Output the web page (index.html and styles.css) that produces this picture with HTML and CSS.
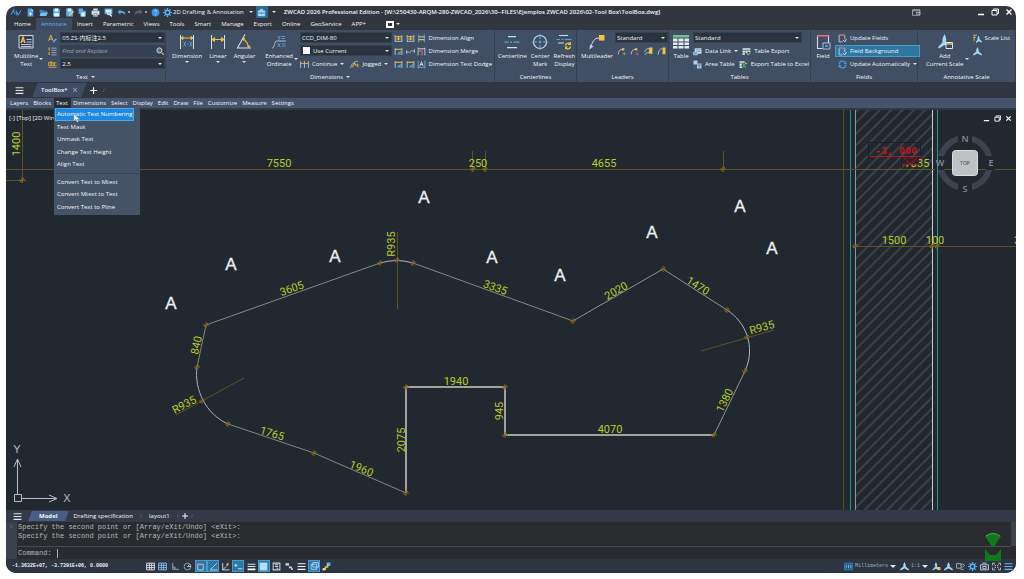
FILE: index.html
```
<!DOCTYPE html>
<html lang="en">

<head>
    <meta charset="UTF-8">
    <meta name="viewport" content="width=device-width, initial-scale=1.0">
    <title>ZWCAD 2026 Professional Edition</title>
    <link rel="stylesheet" href="styles.css">
</head>

<body>
    <!-- icon sprite -->
    <svg class="sprite" aria-hidden="true">
        <symbol id="i-logo" viewBox="0 0 20 16"><path d="M1 12 6 3v5M8 12V6M11 13V7l3 5 5-8" fill="none" stroke="#3f9be8" stroke-width="1.8"/></symbol>
        <symbol id="i-new" viewBox="0 0 16 16"><path d="M3 1h7l3 4v10H3z" fill="#4ea6ea"/><path d="M10 1v4h3" fill="#d5ecff"/><path d="M8 8v5M5.500 10.500h5" stroke="#fff" stroke-width="1.500"/></symbol>
        <symbol id="i-open" viewBox="0 0 16 16"><path d="M1 3h5l2 2h6v3H1z" fill="#2f86cf"/><path d="M3 8h13l-3 6H1z" fill="#7cc0f2"/></symbol>
        <symbol id="i-save" viewBox="0 0 16 16"><path d="M2 1h10l2 2v12H2z" fill="#58adf0"/><path d="M5 1h6v5H5zM4 9h8v6H4z" fill="#e6f3ff"/></symbol>
        <symbol id="i-saveas" viewBox="0 0 16 16"><path d="M2 1h10l2 2v12H2z" fill="#58adf0"/><path d="M5 1h6v5H5z" fill="#e6f3ff"/><path d="M7 14l1-4 6-5 2 2-6 6z" fill="#f0c58a"/></symbol>
        <symbol id="i-multi" viewBox="0 0 16 16"><path d="M1 1h8v4h5v10H4V10H1z" fill="#58adf0"/><path d="M6 8h6v7H6z" fill="#e6f3ff"/></symbol>
        <symbol id="i-print" viewBox="0 0 16 16"><path d="M4 1h8v4h3v7h-3v3H4v-3H1V5h3z" fill="#d9e2ec"/><path d="M4 5h8M5 10h6v3H5z" stroke="#44536a" fill="#fff"/></symbol>
        <symbol id="i-preview" viewBox="0 0 16 16"><path d="M1 1h14v10H1z" fill="#4ea6ea"/><path d="M3 3h10v5H3z" fill="#dceeff"/><circle cx="9" cy="9" r="3.500" fill="#9fd0f7" stroke="#fff"/><path d="m11 12 3 3" stroke="#fff" stroke-width="2"/></symbol>
        <symbol id="i-undo" viewBox="0 0 16 16"><path d="M1 7l5-5v3c5 0 9 2 9 8-2-3-4-4-9-4v3z" fill="#4ea6ea"/></symbol>
        <symbol id="i-redo" viewBox="0 0 16 16"><path d="M15 7l-5-5v3c-5 0-9 2-9 8 2-3 4-4 9-4v3z" fill="#596474"/></symbol>
        <symbol id="i-help" viewBox="0 0 16 16"><circle cx="8" cy="8" r="7" fill="#3a94e0"/><path d="M6 6c0-3 4-3 4 0 0 1.500-2 1.500-2 3.500M8 11v2" stroke="#9fd4ff" fill="none" stroke-width="1.500"/></symbol>
        <symbol id="i-gear" viewBox="0 0 16 16"><circle cx="8" cy="8" r="4" fill="none" stroke="#5cb8f5" stroke-width="2.500"/><path d="M8 0v3M8 13v3M0 8h3M13 8h3M2.500 2.500l2 2M11.500 11.500l2 2M13.500 2.500l-2 2M4.500 11.500l-2 2" stroke="#5cb8f5" stroke-width="2.200"/></symbol>
        <symbol id="i-bag" viewBox="0 0 16 16"><path d="M2 5h12v9H2zM6 5V2h4v3" fill="#a8dbfa" stroke="#a8dbfa"/><path d="M2 9h12M8 8v3" stroke="#2a6e9f" stroke-width="1.300"/></symbol>
        <symbol id="i-screen" viewBox="0 0 16 16"><path d="M1 3h13v10H1zM1 5h13M8 8h6v3H8z" fill="none" stroke="#b6bec9" stroke-width="1.400"/></symbol>
        <symbol id="i-min" viewBox="0 0 16 16"><path d="M2 13h12" stroke="currentColor" stroke-width="3"/></symbol>
        <symbol id="i-restore" viewBox="0 0 16 16"><path d="M2 5h10v9H2zM5 5V2h10v9h-3" fill="none" stroke="currentColor" stroke-width="2"/></symbol>
        <symbol id="i-close" viewBox="0 0 16 16"><path d="m3 3 10 10M13 3 3 13" stroke="currentColor" stroke-width="2.800"/></symbol>
        <symbol id="i-burger" viewBox="0 0 16 16"><path d="M1 3h14M1 8h14M1 13h14" stroke="currentColor" stroke-width="2"/></symbol>
        <symbol id="i-plus" viewBox="0 0 16 16"><path d="M8 2v12M2 8h12" stroke="currentColor" stroke-width="2"/></symbol>

        <symbol id="i-mtext" viewBox="0 0 32 32"><path d="M2 3h28v25H2z" fill="#334052" stroke="#cdd8e4" stroke-width="2"/><path d="m6 18 4-12 4 12M7 14h6" fill="none" stroke="#f3c545" stroke-width="2.500"/><path d="M17 11h10M17 16h10M6 21h21M6 25h21" stroke="#cdd8e4" stroke-width="1.800"/></symbol>
        <symbol id="i-tstyle" viewBox="0 0 16 16"><path d="M1 12 5 2l4 10M2 9h6" fill="none" stroke="#f0c040" stroke-width="1.600"/><path d="M10 15c0-4 3-4 5-6" stroke="#5eb4ee" stroke-width="2.500" fill="none"/></symbol>
        <symbol id="i-list" viewBox="0 0 16 16"><path d="M2 1v5M2 9v5" stroke="#f0c040" stroke-width="1.800"/><path d="M6 2h9M6 6h9M6 10h9M6 14h9" stroke="#b8c5d4" stroke-width="1.300"/></symbol>
        <symbol id="i-abc" viewBox="0 0 16 16"><path d="M1 4h4v6H1zM6 2v8h4V5H6M15 5h-4v5h4" fill="none" stroke="#e3a93c" stroke-width="1.600"/><path d="M1 13h14" stroke="#d8a94a" stroke-width="1.500"/></symbol>
        <symbol id="i-find" viewBox="0 0 16 16"><circle cx="6" cy="6" r="4.500" fill="#54708c" stroke="#cfd9e3" stroke-width="1.600"/><path d="m10 10 4 4" stroke="#e8b63b" stroke-width="2.500"/></symbol>
        <symbol id="i-dim" viewBox="0 0 32 32"><path d="M3 2v28M29 2v28" stroke="#d5dde6" stroke-width="2"/><path d="M4 8h24M4 8l4-3v6zM28 8l-4-3v6z" stroke="#f3bf3b" fill="#f3bf3b" stroke-width="2"/><path d="m9 15 5 10M14 15 9 25M16 20h4M21 15l5 10M26 15l-5 10" stroke="#56acdf" stroke-width="1.500"/></symbol>
        <symbol id="i-linear" viewBox="0 0 32 32"><path d="M3 2v28M29 2v28" stroke="#d5dde6" stroke-width="2"/><path d="M4 11h24M4 11l5-4v8zM28 11l-5-4v8z" stroke="#f3bf3b" fill="#f3bf3b" stroke-width="2"/></symbol>
        <symbol id="i-angular" viewBox="0 0 32 32"><path d="M18 1 3 28h27" fill="none" stroke="#d5dde6" stroke-width="2.200"/><path d="M13 10c7 3 11 8 12 17" fill="none" stroke="#f3bf3b" stroke-width="2.500"/><path d="m13 7 6 2-4 5zM22 24l7-1-3 6z" fill="#f3bf3b"/></symbol>
        <symbol id="i-ordinate" viewBox="0 0 32 32"><path d="M2 28c6 0 4-14 9-14h19" fill="none" stroke="#bccbd9" stroke-width="1.800"/><path d="m13 4 3 4 3-4M16 8v4M21 5h7M21 9h7M13 18l6 8M19 18l-6 8M22 20h7M22 24h7" stroke="#4fa6d8" stroke-width="1.800" fill="none"/></symbol>
        <symbol id="i-d1" viewBox="0 0 16 16"><path d="M2 2v12M14 2v12M2 13h12" stroke="#d5dde6" stroke-width="1.400"/><path d="M2 5h12M8 3v8M4 9h8" stroke="#f3bf3b" stroke-width="1.800"/></symbol>
        <symbol id="i-d2" viewBox="0 0 16 16"><path d="M2 2v12M14 2v12" stroke="#d5dde6" stroke-width="1.400"/><path d="M2 4h12" stroke="#f3bf3b" stroke-width="2"/><path d="m6 13 6-5M9 13l4-1" stroke="#54aee6" stroke-width="2"/></symbol>
        <symbol id="i-d3" viewBox="0 0 16 16"><path d="M3 1v14M13 1v14" stroke="#72b9ea" stroke-width="1.400"/><path d="M3 5h10" stroke="#e5edf5" stroke-width="1.400"/><path d="M3 10h10" stroke="#f3bf3b" stroke-width="2"/></symbol>
        <symbol id="i-d4" viewBox="0 0 16 16"><path d="M1 6v6M15 4v6M1 9h4M11 7h4M6 11l4-5" stroke="#d5dde6" stroke-width="1.400"/></symbol>
        <symbol id="i-d5" viewBox="0 0 16 16"><path d="M2 1v14M14 1v14M2 3h12" stroke="#d5dde6" stroke-width="1.400"/><path d="M9 3v12" stroke="#df6f79" stroke-width="1.800"/><path d="M4 7h3" stroke="#f3bf3b" stroke-width="2"/></symbol>
        <symbol id="i-d6" viewBox="0 0 16 16"><path d="M2 1v14M14 1v14M2 13h12" stroke="#72b9ea" stroke-width="1.400"/><path d="m5 11 3-8 3 8M6 8h4" stroke="#e5edf5" fill="none" stroke-width="1.400"/></symbol>
        <symbol id="i-cont" viewBox="0 0 16 16"><path d="M1 2v12M8 2v12M15 2v12" stroke="#d5dde6" stroke-width="1.300"/><path d="M1 6h14" stroke="#f3bf3b" stroke-width="1.600"/></symbol>
        <symbol id="i-jog" viewBox="0 0 16 16"><path d="M1 14c2-7 5-11 13-12" fill="none" stroke="#d5dde6" stroke-width="1.300"/><path d="m4 13 4-8 2 5 4-3v6" fill="none" stroke="#f3bf3b" stroke-width="1.700"/></symbol>
        <symbol id="i-cline" viewBox="0 0 32 32"><path d="M8 5h16M6 27h20" stroke="#d5dde6" stroke-width="2.500"/><path d="M1 16h8M12 16h4M19 16h12" stroke="#45a9de" stroke-width="2.500"/></symbol>
        <symbol id="i-cmark" viewBox="0 0 32 32"><circle cx="16" cy="16" r="13" fill="none" stroke="#d5dde6" stroke-width="2.200"/><path d="M16 0v10M16 13v6M16 22v10M0 16h10M13 16h6M22 16h10" stroke="#5bb5e8" stroke-width="2"/></symbol>
        <symbol id="i-refresh" viewBox="0 0 32 32"><path d="M6 3h18M4 18h12" stroke="#d5dde6" stroke-width="2"/><path d="M1 11h7M11 11h4M18 11h13" stroke="#45a9de" stroke-width="2"/><path d="M19 23c1-6 8-6 10-2M29 25c-1 6-8 6-10 2" fill="none" stroke="#f3bf3b" stroke-width="3"/><path d="M30 15v7h-7zM18 31v-6h6z" fill="#f3bf3b"/></symbol>
        <symbol id="i-mleader" viewBox="0 0 32 32"><path d="M4 27C6 16 10 8 20 8" fill="none" stroke="#d5dde6" stroke-width="2"/><path d="M1 31l1-10 7 4z" fill="#a9d6f4"/><path d="M20 2h11v11H20z" fill="#f7c344"/></symbol>
        <symbol id="i-ml1" viewBox="0 0 16 16"><path d="M2 13c1-6 3-9 8-9" fill="none" stroke="#d5dde6" stroke-width="1.400"/><path d="M9 2h4v4H9z" fill="#f7c344"/><path d="M13 9v6M10 12h6" stroke="#55b864" stroke-width="1.600"/></symbol>
        <symbol id="i-ml2" viewBox="0 0 16 16"><path d="M2 13c1-6 3-9 8-9" fill="none" stroke="#d5dde6" stroke-width="1.400"/><path d="M9 2h4v4H9z" fill="#f7c344"/><path d="m11 10 4 4M15 10l-4 4" stroke="#dd6571" stroke-width="1.600"/></symbol>
        <symbol id="i-ml3" viewBox="0 0 16 16"><path d="M1 9c1-4 3-6 8-6M2 14c1-4 3-4 8-4" fill="none" stroke="#d5dde6" stroke-width="1.400"/><path d="M9 1h6v11H9z" fill="#f7c344"/></symbol>
        <symbol id="i-ml4" viewBox="0 0 16 16"><path d="M2 14c1-8 3-11 8-11" fill="none" stroke="#d5dde6" stroke-width="1.400"/><path d="M10 1h5v12h-5z" fill="#f7c344"/></symbol>
        <symbol id="i-table" viewBox="0 0 32 32"><path d="M0 2h32v5H0z" fill="#78bf85"/><path d="M0 9h9v6H0zM11 9h10v6H11zM23 9h9v6h-9zM0 17h9v5H0zM11 17h10v5H11zM23 17h9v5h-9zM0 24h9v5H0zM11 24h10v5H11zM23 24h9v5h-9z" fill="#e5ebf1"/></symbol>
        <symbol id="i-dlink" viewBox="0 0 16 16"><path d="M3 2h12v10H3z" fill="#c8d5e2"/><path d="M5 5h8M5 8h8" stroke="#4a7fae"/><path d="M1 9h7v5H1z" fill="#4ea0dc" stroke="#dce9f5"/></symbol>
        <symbol id="i-area" viewBox="0 0 16 16"><path d="M1 1h7v7H1zM7 6h8v9H7z" fill="#b7cbdd"/><path d="M3 10v5M7 9h8M11 6v9" stroke="#3f7fb3" stroke-width="1.300"/></symbol>
        <symbol id="i-texp" viewBox="0 0 16 16"><path d="M1 2h14v3H1zM1 6h4v4H1zM6 6h4v4H6zM11 6h4v3h-4zM1 11h4v3H1z" fill="#dfe6ed"/><path d="m8 11 3 3 4-4" stroke="#69c075" fill="none" stroke-width="2"/></symbol>
        <symbol id="i-xls" viewBox="0 0 16 16"><path d="M1 2h9v3H1zM1 6h4v4H1zM1 11h4v3H1z" fill="#dfe6ed"/><path d="m6 5 6 9M12 5l-6 9" stroke="#48b06a" stroke-width="2"/><path d="m11 4 4 2-3 2z" fill="#f3bf3b"/></symbol>
        <symbol id="i-field" viewBox="0 0 32 32"><path d="M5 3h22v16M5 3v26h10" fill="none" stroke="#d5dde6" stroke-width="2.200"/><path d="M5 4h22" stroke="#d94e66" stroke-width="3"/><path d="M16 18h14v12H16z" fill="#334b67" stroke="#a9c2da" stroke-width="2"/><path d="M20 24h6" stroke="#66b7ea" stroke-width="3"/></symbol>
        <symbol id="i-fsm" viewBox="0 0 16 16"><path d="M2 2h10v7M2 2v12h6" fill="none" stroke="#d5dde6" stroke-width="1.400"/><path d="M2 2h10" stroke="#d94e66" stroke-width="2"/><path d="m9 11 3 3 3-5" fill="none" stroke="#eaf2f9" stroke-width="1.600"/></symbol>
        <symbol id="i-sync" viewBox="0 0 16 16"><path d="M2 8c0-7 9-8 11-3M14 8c0 7-9 8-11 3" fill="none" stroke="#3fa0df" stroke-width="2"/><path d="M15 2v5h-5zM1 14V9h5z" fill="#3fa0df"/></symbol>
        <symbol id="i-scale" viewBox="0 0 32 32"><path d="M15 0c4 8 4 12 3 16l9 9-1 3-11-6-11 7-2-3 9-9C10 12 11 8 15 0z" fill="#a5d9f3"/><path d="M18 17h13v12H18z" fill="#324860" stroke="#e0ebf4" stroke-width="2"/><path d="M18 20h13" stroke="#e6bb4a" stroke-width="3"/></symbol>
        <symbol id="i-ssm" viewBox="0 0 16 16"><path d="M8 0c2 4 3 6 2 8l6 5-1 2-6-3-1-1-1 1-6 3-1-2 6-5C5 6 6 4 8 0z" fill="#a5d9f3"/></symbol>
        <symbol id="i-slist" viewBox="0 0 16 16"><path d="M10 3c2 3 2 5 1 6l5 4-1 2-5-2-4 3-1-2 3-4c0-2 0-4 2-7z" fill="#a5d9f3"/><path d="M1 2h6M1 6h4M2 2v10" stroke="#f3bf3b" stroke-width="1.500"/></symbol>

        <symbol id="s-grid" viewBox="0 0 16 16"><path d="M1 2h14v12H1zM6 2v12M10 2v12M1 6h14M1 10h14" fill="none" stroke="#dbe4ee" stroke-width="1.600"/></symbol>
        <symbol id="s-snap" viewBox="0 0 16 16"><path d="M1 2h14v12H1zM6 2v12M10 2v12M1 6h14M1 10h14" fill="none" stroke="#86bdea" stroke-width="1.600"/></symbol>
        <symbol id="s-ortho" viewBox="0 0 16 16"><path d="M3 2v11h11M3 9h4v4" fill="none" stroke="#a3adba" stroke-width="1.600"/></symbol>
        <symbol id="s-polar" viewBox="0 0 16 16"><circle cx="8" cy="8" r="6" fill="none" stroke="#9fb0c0" stroke-width="1.500"/><path d="M8 8h6M8 8l4-4" stroke="#cfdae5" stroke-width="1.500"/></symbol>
        <symbol id="s-osnap" viewBox="0 0 16 16"><path d="M3 4h10v10H3z" fill="none" stroke="#c3d6e8" stroke-width="1.500"/><path d="M1 2h4v4H1z" fill="#df7280"/></symbol>
        <symbol id="s-track" viewBox="0 0 16 16"><path d="M14 2 2 14h13" fill="none" stroke="#b9ddf7" stroke-width="1.500"/></symbol>
        <symbol id="s-ucs" viewBox="0 0 16 16"><path d="M3 2v12h12M3 14 9 8" fill="none" stroke="#dbe4ee" stroke-width="1.600"/><path d="m10 3 3 3M13 2l-3 5" stroke="#f0c040" stroke-width="2"/></symbol>
        <symbol id="s-dyn" viewBox="0 0 16 16"><path d="M3 3v6M1 6h5M7 12h8" stroke="#b9ddf7" stroke-width="1.800"/></symbol>
        <symbol id="s-lwt" viewBox="0 0 16 16"><path d="M1 4h14M1 8h14" stroke="#dbe4ee" stroke-width="2"/><path d="M1 13h14" stroke="#fff" stroke-width="3"/></symbol>
        <symbol id="s-fill" viewBox="0 0 16 16"><path d="M1 1h14v14H1z" fill="#b2ddfa"/></symbol>
        <symbol id="s-cyc" viewBox="0 0 16 16"><path d="M2 2h12v12H2zM5 5h6M5 8h6M8 11h3" fill="none" stroke="#cdd6e0" stroke-width="1.800"/></symbol>
        <symbol id="s-sel" viewBox="0 0 16 16"><path d="M1 2h6v4H1zM7 8h5v3H7zM11 11h3v3h-3z" fill="#d7e1ec"/><path d="m3 3 9 9" stroke="#8fb8da"/></symbol>
        <symbol id="s-model" viewBox="0 0 16 16"><path d="M5 1h10v8H5zM2 4h10v9H2z" fill="#2d77b3" stroke="#b7dcf7" stroke-width="1.500"/></symbol>
        <symbol id="s-paint" viewBox="0 0 16 16"><path d="M8 1h7v6H8z" fill="#62b2ef"/><path d="M2 13h4V9h4V5" fill="none" stroke="#f0c040" stroke-width="2.500"/><path d="M1 11h4v4H1z" fill="#dbe4ee"/></symbol>
        <symbol id="s-units" viewBox="0 0 16 16"><path d="M1 2h14v12H1z" fill="#1c5a82" stroke="#4ba0d6"/><path d="M4 5v6M8 5v6M12 5v6" stroke="#7fc3ef" stroke-width="1.500"/></symbol>
        <symbol id="s-anno" viewBox="0 0 16 16"><path d="M7 0c2 4 3 6 2 8l5 5-1 2-6-3-6 3v-2l5-5C4 6 5 4 7 0z" fill="#9dd0ef"/><path d="M10 9h5v5h-5z" fill="#f0c040"/></symbol>
        <symbol id="s-link" viewBox="0 0 16 16"><path d="M1 3h8v8H1zM9 6l3-3 3 3-4 4M8 13h6" fill="none" stroke="#b6c0cc" stroke-width="1.500"/></symbol>
        <symbol id="s-iso" viewBox="0 0 16 16"><path d="M1 5h14v9H1zM4 2h8M5 8h6v4H5z" fill="none" stroke="#c6d0db" stroke-width="1.600"/></symbol>
        <symbol id="s-full" viewBox="0 0 16 16"><path d="M1 6V2h4M11 2h4v4M15 10v4h-4M5 14H1v-4M4 5l3 2M12 5 9 7M4 11l3-2M12 11 9 9" fill="none" stroke="#c6d0db" stroke-width="1.600"/></symbol>
    </svg>

    <main class="window">
        <!-- title bar -->
        <header class="titlebar">
            <div class="quick">
                <button aria-label="Application menu"><svg><use href="#i-logo"/></svg></button>
                <button aria-label="New"><svg><use href="#i-new"/></svg></button>
                <button aria-label="Open"><svg><use href="#i-open"/></svg></button>
                <button aria-label="Save"><svg><use href="#i-save"/></svg></button>
                <button aria-label="Save as"><svg><use href="#i-saveas"/></svg></button>
                <button aria-label="Save all"><svg><use href="#i-multi"/></svg></button>
                <button aria-label="Print"><svg><use href="#i-print"/></svg></button>
                <button aria-label="Preview"><svg><use href="#i-preview"/></svg></button>
                <button class="drop" aria-label="Undo"><svg><use href="#i-undo"/></svg><i class="dot"></i></button>
                <button class="drop" aria-label="Redo"><svg><use href="#i-redo"/></svg><i class="dot"></i></button>
                <button aria-label="Help"><svg><use href="#i-help"/></svg></button>
            </div>
            <button class="workspace"><svg><use href="#i-gear"/></svg>2D Drafting &amp; Annotation <i class="caret"></i></button>
            <button class="toolbox" aria-label="Toolbox"><svg><use href="#i-bag"/></svg></button>
            <i class="caret"></i>
            <h1>ZWCAD 2026 Professional Edition - [W:\250430-ARQM-280-ZWCAD_2026\30--FILES\Ejemplos ZWCAD 2026\02-Tool Box\ToolBox.dwg]</h1>
            <button class="share" aria-label="Share"><svg><use href="#i-screen"/></svg></button>
            <div class="win-btns">
                <button aria-label="Minimize"><svg><use href="#i-min"/></svg></button>
                <button aria-label="Restore"><svg><use href="#i-restore"/></svg></button>
                <button aria-label="Close"><svg><use href="#i-close"/></svg></button>
            </div>
        </header>

        <nav class="ribbon-tabs">
            <a href="#">Home</a>
            <a href="#" class="active">Annotate</a>
            <a href="#">Insert</a>
            <a href="#">Parametric</a>
            <a href="#">Views</a>
            <a href="#">Tools</a>
            <a href="#">Smart</a>
            <a href="#">Manage</a>
            <a href="#">Export</a>
            <a href="#">Online</a>
            <a href="#">GeoService</a>
            <a href="#">APP+</a>
            <button class="collapse" aria-label="Collapse ribbon"><b></b><i class="caret"></i></button>
        </nav>

        <!-- ribbon -->
        <div class="ribbon">
            <section class="panel p-text">
                <div class="panel-body">
                    <button class="big side"><svg><use href="#i-mtext"/></svg><span>Multiline<br>Text</span><i class="caret"></i></button>
                    <div class="col icons">
                        <button aria-label="Text style"><svg><use href="#i-tstyle"/></svg></button>
                        <button aria-label="Justify"><svg><use href="#i-list"/></svg></button>
                        <button aria-label="Spell check"><svg><use href="#i-abc"/></svg></button>
                    </div>
                    <div class="col grow">
                        <label class="select"><select aria-label="Text style name"><option>05.ZS-内标注2.5</option></select></label>
                        <div class="search"><input type="text" placeholder="Find and Replace" aria-label="Find and Replace"><button aria-label="Find"><svg><use href="#i-find"/></svg></button></div>
                        <label class="select"><select aria-label="Text height"><option>2.5</option></select></label>
                    </div>
                </div>
                <footer>Text <i class="caret"></i></footer>
            </section>

            <section class="panel p-dims">
                <div class="panel-body">
                    <button class="big"><svg><use href="#i-dim"/></svg><span>Dimension</span><i class="caret"></i></button>
                    <button class="big"><svg><use href="#i-linear"/></svg><span>Linear</span><i class="caret"></i></button>
                    <button class="big"><svg><use href="#i-angular"/></svg><span>Angular</span><i class="caret"></i></button>
                    <button class="big side"><svg><use href="#i-ordinate"/></svg><span>Enhanced<br>Ordinate</span><i class="caret"></i></button>
                    <div class="col grow">
                        <label class="select"><select aria-label="Dimension style"><option>CCD_DIM-80</option></select></label>
                        <label class="select swatch"><select aria-label="Dimension layer"><option>Use Current</option></select></label>
                        <div class="row">
                            <button class="small"><svg><use href="#i-cont"/></svg>Continue <i class="caret"></i></button>
                            <button class="small"><svg><use href="#i-jog"/></svg>Jogged <i class="caret"></i></button>
                        </div>
                    </div>
                    <div class="col icons">
                        <button aria-label="Quick dimension"><svg><use href="#i-d1"/></svg></button>
                        <button aria-label="Update"><svg><use href="#i-d2"/></svg></button>
                        <button aria-label="Break"><svg><use href="#i-d2"/></svg></button>
                    </div>
                    <div class="col icons">
                        <button aria-label="Adjust space"><svg><use href="#i-d1"/></svg></button>
                        <button aria-label="Jog line"><svg><use href="#i-d4"/></svg></button>
                        <button aria-label="Reassociate"><svg><use href="#i-d2"/></svg></button>
                    </div>
                    <div class="col">
                        <button class="small"><svg><use href="#i-d3"/></svg>Dimension Align</button>
                        <button class="small"><svg><use href="#i-d5"/></svg>Dimension Merge</button>
                        <button class="small"><svg><use href="#i-d6"/></svg>Dimension Text Dodge</button>
                    </div>
                </div>
                <footer>Dimensions <i class="caret"></i></footer>
            </section>

            <section class="panel p-center">
                <div class="panel-body">
                    <button class="big"><svg><use href="#i-cline"/></svg><span>Centerline</span></button>
                    <button class="big"><svg><use href="#i-cmark"/></svg><span>Center<br>Mark</span></button>
                    <button class="big"><svg><use href="#i-refresh"/></svg><span>Refresh<br>Display</span></button>
                </div>
                <footer>Centerlines</footer>
            </section>

            <section class="panel p-leaders">
                <div class="panel-body">
                    <button class="big"><svg><use href="#i-mleader"/></svg><span>Multileader</span></button>
                    <div class="col grow">
                        <label class="select"><select aria-label="Leader style"><option>Standard</option></select></label>
                        <div class="row">
                            <button aria-label="Add leader"><svg><use href="#i-ml1"/></svg></button>
                            <button aria-label="Remove leader"><svg><use href="#i-ml2"/></svg></button>
                            <button aria-label="Align leaders"><svg><use href="#i-ml3"/></svg></button>
                            <button aria-label="Collect leaders"><svg><use href="#i-ml4"/></svg></button>
                        </div>
                    </div>
                </div>
                <footer>Leaders</footer>
            </section>

            <section class="panel p-tables">
                <div class="panel-body">
                    <button class="big"><svg><use href="#i-table"/></svg><span>Table</span></button>
                    <div class="col">
                        <label class="select"><select aria-label="Table style"><option>Standard</option></select></label>
                        <div class="row">
                            <button class="small"><svg><use href="#i-dlink"/></svg>Data Link <i class="caret"></i></button>
                            <button class="small"><svg><use href="#i-texp"/></svg>Table Export</button>
                        </div>
                        <div class="row">
                            <button class="small"><svg><use href="#i-area"/></svg>Area Table</button>
                            <button class="small"><svg><use href="#i-xls"/></svg>Export Table to Excel</button>
                        </div>
                    </div>
                </div>
                <footer>Tables</footer>
            </section>

            <section class="panel p-fields">
                <div class="panel-body">
                    <button class="big"><svg><use href="#i-field"/></svg><span>Field</span></button>
                    <div class="col">
                        <button class="small"><svg><use href="#i-fsm"/></svg>Update Fields</button>
                        <button class="small on"><svg><use href="#i-fsm"/></svg>Field Background</button>
                        <button class="small"><svg><use href="#i-sync"/></svg>Update Automatically <i class="caret"></i></button>
                    </div>
                </div>
                <footer>Fields</footer>
            </section>

            <section class="panel p-scale">
                <div class="panel-body">
                    <button class="big side"><svg><use href="#i-scale"/></svg><span>Add<br>Current Scale</span><i class="caret"></i></button>
                    <div class="col">
                        <button class="small"><svg><use href="#i-slist"/></svg>Scale List</button>
                        <button class="small" aria-label="Object scale"><svg><use href="#i-ssm"/></svg></button>
                    </div>
                </div>
                <footer>Annotative Scale</footer>
            </section>
        </div>

        <!-- open drawings -->
        <div class="doc-tabs">
            <button class="burger" aria-label="Drawings"><svg><use href="#i-burger"/></svg></button>
            <a href="#" class="doc-tab"><span>ToolBox*</span><svg><use href="#i-close"/></svg></a>
            <button class="add" aria-label="New drawing"><svg><use href="#i-plus"/></svg></button>
            <span class="slash">/</span>
        </div>

        <nav class="menubar">
            <a href="#">Layers</a>
            <a href="#">Blocks</a>
            <div class="menu-item">
                <a href="#" class="open">Text</a>
                <div class="dropdown">
                    <a href="#" class="hover">Automatic Text Numbering</a>
                    <a href="#">Text Mask</a>
                    <a href="#">Unmask Text</a>
                    <a href="#">Change Text Height</a>
                    <a href="#">Align Text</a>
                    <hr>
                    <a href="#">Convert Text to Mtext</a>
                    <a href="#">Convert Mtext to Text</a>
                    <a href="#">Convert Text to Pline</a>
                    <svg class="cursor" viewBox="0 0 10 14"><path d="M1 0v11l3-3 2 5 2-1-2-4h4z" fill="#fff" stroke="#5a6a7a" stroke-width=".5"/></svg>
                </div>
            </div>
            <a href="#">Dimensions</a>
            <a href="#">Select</a>
            <a href="#">Display</a>
            <a href="#">Edit</a>
            <a href="#">Draw</a>
            <a href="#">File</a>
            <a href="#">Customize</a>
            <a href="#">Measure</a>
            <a href="#">Settings</a>
        </nav>

        <!-- drawing area -->
        <div class="canvas">
            <svg class="drawing" viewBox="6 110 1010 400" preserveAspectRatio="xMidYMid slice">
                <defs>
                    <pattern id="hatch" width="8" height="8" patternUnits="userSpaceOnUse" patternTransform="rotate(45)">
                        <path d="M4 0v8" stroke="#525962" stroke-width="1"/>
                    </pattern>
                    <path id="tick" d="M-3 0h6M0-3v6M-2 2l4-4" stroke="#86651c" stroke-width="1" fill="none"/>
                </defs>

                <!-- wall -->
                <rect x="856" y="110" width="76" height="400" fill="url(#hatch)"/>
                <path d="M843.500 110v400" stroke="#5d4c20"/>
                <path d="M850.500 110v400M937.500 110v400" stroke="#1f9a92"/>
                <path d="M855.500 110v400" stroke="#8f969e"/>
                <path d="M932.500 110v400" stroke="#c9cdd2"/>

                <!-- dimension lines -->
                <g stroke="#5f531e" fill="none">
                    <path d="M6 169.500h1010M855 246.500h161M22.500 110v73M6 180.500h20"/>
                    <path d="M472.500 151v21M485.500 151v21M723.500 151v21"/>
                    <path d="M397.500 232v77M176 415l68-37M701 351l73-21"/>
                </g>

                <!-- outline -->
                <g fill="none" stroke="#87887a">
                    <path d="M197 367 206 325 380 263M413 263 573 321M406 493 314 453 228 424"/>
                    <path d="M573 321 663 269 727 310M745 371 714 435" stroke="#94948c"/>
                    <path d="M380 263Q397 258 413 263M727 310C746 322 756 347 745 371M197 367C194 390 206 414 228 424" stroke="#aeb2c4"/>
                    <path d="M406 493V387H505V435H714" stroke="#a3a29a" stroke-width="2"/>
                </g>

                <g>
                    <use href="#tick" x="206" y="325"/><use href="#tick" x="197" y="367"/><use href="#tick" x="202" y="401"/>
                    <use href="#tick" x="228" y="424"/><use href="#tick" x="314" y="453"/><use href="#tick" x="406" y="493"/>
                    <use href="#tick" x="406" y="387"/><use href="#tick" x="505" y="387"/><use href="#tick" x="505" y="435"/>
                    <use href="#tick" x="714" y="435"/><use href="#tick" x="745" y="371"/><use href="#tick" x="747" y="337"/>
                    <use href="#tick" x="727" y="310"/><use href="#tick" x="663" y="269"/><use href="#tick" x="573" y="321"/>
                    <use href="#tick" x="413" y="263"/><use href="#tick" x="397" y="260"/><use href="#tick" x="380" y="263"/>
                    <use href="#tick" x="473" y="169"/><use href="#tick" x="485" y="169"/><use href="#tick" x="723" y="169"/>
                    <use href="#tick" x="22" y="180"/><use href="#tick" x="855" y="246"/><use href="#tick" x="932" y="246"/><use href="#tick" x="937" y="246"/>
                </g>

                <g class="dim">
                    <text x="279" y="167">7550</text>
                    <text x="478" y="167">250</text>
                    <text x="604" y="167">4655</text>
                    <text x="917" y="167">7335</text>
                    <text x="894" y="244">1500</text>
                    <text x="935" y="244">100</text>
                    <text x="1017" y="244">3</text>
                    <text x="456" y="385">1940</text>
                    <text x="610" y="433">4070</text>
                    <text transform="translate(20 144) rotate(-90)">1400</text>
                    <text transform="translate(395 244) rotate(-90)">R935</text>
                    <text transform="translate(293 292) rotate(-20)">3605</text>
                    <text transform="translate(200 346) rotate(-78)">840</text>
                    <text transform="translate(186 408) rotate(-28)">R935</text>
                    <text transform="translate(271 437) rotate(17)">1765</text>
                    <text transform="translate(360 472) rotate(23)">1960</text>
                    <text transform="translate(405 440) rotate(-90)">2075</text>
                    <text transform="translate(503 411) rotate(-90)">945</text>
                    <text transform="translate(728 402) rotate(-64)">1380</text>
                    <text transform="translate(763 331) rotate(-16)">R935</text>
                    <text transform="translate(696 289) rotate(32)">1470</text>
                    <text transform="translate(618 294) rotate(-30)">2020</text>
                    <text transform="translate(494 291) rotate(20)">3335</text>
                </g>

                <g class="mark">
                    <text x="171" y="309">A</text>
                    <text x="231" y="270">A</text>
                    <text x="335" y="262">A</text>
                    <text x="424" y="203">A</text>
                    <text x="492" y="263">A</text>
                    <text x="560" y="281">A</text>
                    <text x="652" y="238">A</text>
                    <text x="740" y="212">A</text>
                    <text x="772" y="254">A</text>
                </g>

                <!-- level mark -->
                <path d="M902 158h17v6h-17z" fill="#33202a"/>
                <path d="M868.500 142.500h52v14h-52zM901.500 157v11" fill="none" stroke="#1a1f25"/>
                <path d="M870 156.500h51M902 164.500h18M904 158l6 6 7-6" stroke="#b3141f" fill="none"/>
                <text class="level" x="896" y="154">-3, 000</text>

                <!-- view cube -->
                <circle cx="965" cy="163" r="25" fill="none" stroke="#3d444f" stroke-width="6"/>
                <path d="M958 134h14v8h-14zM958 184h14v9h-14zM935 156h9v14h-9zM986 156h9v14h-9z" fill="#212830"/>
                <path d="M937.500 150v26" stroke="#1f9a92"/>
                <g class="compass">
                    <text x="965" y="142">N</text>
                    <text x="965" y="192">S</text>
                    <text x="940" y="166">W</text>
                    <text x="991" y="166">E</text>
                </g>
                <rect x="952.500" y="150.500" width="25" height="25" rx="3" fill="#bfc2c4" stroke="#dcdedf"/>
                <text class="cube-top" x="965" y="165">TOP</text>

                <!-- ucs icon -->
                <g fill="none" stroke="#b9bec5">
                    <path d="M14.500 494.500h7v7h-7zM17.500 494v-35M14 467l3.500-8 3.500 8M21 498.500h36M49 495l8 3.500-8 3.500"/>
                </g>
                <g class="axis">
                    <text x="17" y="453">Y</text>
                    <text x="67" y="502">X</text>
                </g>
            </svg>
            <span class="view-label">[-] [Top] [2D Wireframe]</span>
            <div class="view-btns">
                <button aria-label="Minimize drawing"><svg><use href="#i-min"/></svg></button>
                <button aria-label="Restore drawing"><svg><use href="#i-restore"/></svg></button>
                <button aria-label="Close drawing"><svg><use href="#i-close"/></svg></button>
            </div>
        </div>

        <!-- layout tabs -->
        <nav class="layouts">
            <button class="burger" aria-label="Layouts"><svg><use href="#i-burger"/></svg></button>
            <a href="#" class="active"><span>Model</span></a>
            <a href="#">Drafting specification</a>
            <span class="slash">/</span>
            <a href="#">layout1</a>
            <div class="new-layout">
                <span class="slash">/</span>
                <button class="add" aria-label="New layout"><svg><use href="#i-plus"/></svg></button>
                <span class="slash">/</span>
            </div>
        </nav>

        <!-- command line -->
        <section class="command">
            <button class="grip" aria-label="Close command line"><svg><use href="#i-close"/></svg></button>
            <div class="cmd-main">
                <div class="history">
                    <p>Specify the second point or [Array/eXit/Undo] &lt;eXit&gt;:</p>
                    <p>Specify the second point or [Array/eXit/Undo] &lt;eXit&gt;:</p>
                </div>
                <div class="prompt"><label for="cmd">Command:</label><i class="beam"></i><input id="cmd" type="text"></div>
            </div>
            <div class="scroll"></div>
            <svg class="stamp" viewBox="0 0 16 28"><path d="M0 3Q8-3 16 3L9 14H7z" fill="#0f7a1d"/><path d="M1 3Q8-2 15 3" fill="none" stroke="#5a9a62"/><path d="M0 16l5 6h6l5-6v12H0z" fill="#0f7a1d"/></svg>
        </section>

        <!-- status bar -->
        <footer class="status">
            <span class="coords">-1.3632E+07, -3.7391E+06, 0.0000</span>
            <div class="toggles">
                <button aria-label="Grid"><svg><use href="#s-grid"/></svg></button>
                <button aria-label="Snap"><svg><use href="#s-snap"/></svg></button>
                <button aria-label="Ortho"><svg><use href="#s-ortho"/></svg></button>
                <button aria-label="Polar"><svg><use href="#s-polar"/></svg></button>
                <button class="on" aria-label="Object snap"><svg><use href="#s-osnap"/></svg></button>
                <button class="on" aria-label="Snap tracking"><svg><use href="#s-track"/></svg></button>
                <button aria-label="Dynamic UCS"><svg><use href="#s-ucs"/></svg></button>
                <button class="on" aria-label="Dynamic input"><svg><use href="#s-dyn"/></svg></button>
                <button aria-label="Lineweight"><svg><use href="#s-lwt"/></svg></button>
                <button class="on" aria-label="Transparency"><svg><use href="#s-fill"/></svg></button>
                <button aria-label="Quick properties"><svg><use href="#s-cyc"/></svg></button>
                <button aria-label="Selection cycling"><svg><use href="#s-sel"/></svg></button>
                <button aria-label="List"><svg><use href="#i-burger"/></svg></button>
                <button class="on" aria-label="Model space"><svg><use href="#s-model"/></svg></button>
                <button aria-label="Match"><svg><use href="#s-paint"/></svg></button>
            </div>
            <div class="status-right">
                <button class="unit"><svg><use href="#s-units"/></svg>Millimeters<i class="caret"></i></button>
                <button class="unit"><svg><use href="#i-ssm"/></svg>1:1<i class="caret"></i></button>
                <button aria-label="Annotation visibility"><svg><use href="#s-anno"/></svg></button>
                <button aria-label="Auto scale"><svg><use href="#i-ssm"/></svg></button>
                <button aria-label="Link"><svg><use href="#s-link"/></svg></button>
                <button aria-label="Settings"><svg><use href="#i-gear"/></svg></button>
                <button aria-label="Isolate"><svg><use href="#s-iso"/></svg></button>
                <button aria-label="Full screen"><svg><use href="#s-full"/></svg></button>
                <button class="more" aria-label="Customize"><svg><use href="#i-burger"/></svg></button>
            </div>
        </footer>
    </main>
</body>

</html>
```
FILE: styles.css
```
*,
*::before,
*::after {
    margin: 0;
    padding: 0;
    box-sizing: border-box;
}

body {
    height: 100vh;
    padding: 6px 8px 6px 6px;
    background: #fff;
    font-family: "Open Sans", "Noto Sans CJK SC", sans-serif;
    font-size: 6px;
    line-height: 8px;
    color: #f2f5f9;
}

a {
    color: inherit;
    text-decoration: none;
    white-space: nowrap;
}

button,
input,
select {
    font: inherit;
    color: inherit;
    background: none;
    border: none;
    outline: none;
}

button {
    display: flex;
    align-items: center;
    justify-content: center;
    white-space: nowrap;
}

svg {
    display: block;
    flex: none;
    width: 9px;
    height: 9px;
}

.sprite {
    position: absolute;
    width: 0;
    height: 0;
}

.window {
    height: 100%;
    display: flex;
    flex-direction: column;
    border-radius: 10px;
    overflow: hidden;
    background: #31363f;
}

.caret {
    flex: none;
    width: 0;
    border: 2px solid transparent;
    border-top-color: #dfe5ec;
    border-bottom: 0;
}

.dot {
    width: 2px;
    height: 2px;
    background: #9aa6b4;
}

/* title bar */

.titlebar {
    flex: none;
    height: 12px;
    display: flex;
    align-items: center;
    padding: 0 3px 0 4px;
}

.quick {
    display: flex;
    gap: 4px;
}

.quick button:first-child svg {
    width: 12px;
}

.quick .drop {
    gap: 2px;
}

.workspace {
    gap: 1px;
    margin-left: 3px;
}

.workspace .caret {
    margin-left: 4px;
}

.toolbox {
    width: 12px;
    height: 12px;
    margin: 0 4px 0 3px;
    background: #2b6a94;
}

.titlebar h1 {
    flex: 1;
    margin-left: 8px;
    font-size: 6px;
    font-weight: 600;
    white-space: nowrap;
}

.share {
    margin-right: 56px;
}

.win-btns {
    display: flex;
    gap: 6px;
    color: #fff;
}

.win-btns svg {
    width: 8px;
    height: 8px;
}

/* ribbon tabs */

.ribbon-tabs {
    flex: none;
    height: 12px;
    display: flex;
    align-items: center;
    padding-left: 3px;
}

.ribbon-tabs a {
    padding: 2px 5px;
}

.ribbon-tabs .active {
    background: #3f4c60;
    color: #58aef0;
}

.collapse {
    gap: 2px;
    margin-left: 15px;
}

.collapse b {
    width: 8px;
    height: 7px;
    background: #2f3640;
    border: 2px solid #fff;
}

/* ribbon */

.ribbon {
    flex: none;
    height: 52px;
    display: grid;
    grid-template-columns: 160fr 329fr 82fr 92fr 142fr 107fr 98fr;
    background: #414f64;
}

.panel {
    min-width: 0;
    display: flex;
    flex-direction: column;
    border-right: 1px solid #34404f;
}

.panel-body {
    flex: 1;
    display: flex;
    padding-top: 2px;
}

.panel footer {
    height: 11px;
    display: flex;
    align-items: center;
    justify-content: center;
    gap: 3px;
}

.col {
    display: flex;
    flex-direction: column;
}

.col > * {
    height: 12px;
    margin-bottom: 1px;
}

.grow {
    flex: 1;
    min-width: 0;
}

.row {
    display: flex;
    align-items: center;
    gap: 4px;
}

.icons {
    width: 12px;
}

.small {
    justify-content: flex-start;
    gap: 3px;
}

.big {
    flex-direction: column;
    justify-content: flex-start;
    padding: 2px 2px 0;
    text-align: center;
    position: relative;
}

.big svg {
    width: 16px;
    height: 16px;
    margin-bottom: 2px;
}

.big .caret {
    margin-top: 1px;
}

.side .caret {
    position: absolute;
    right: -3px;
    bottom: 11px;
}

.select {
    display: flex;
    align-items: center;
    height: 11px;
    margin-bottom: 2px;
    background: #2a323d;
    border: 1px solid #36414f;
}

.select select {
    appearance: none;
    width: 100%;
    padding-left: 1px;
}

.select::after {
    content: "";
    margin-right: 2px;
    border: 2px solid transparent;
    border-top-color: #dfe5ec;
    border-bottom: 0;
}

.swatch::before {
    content: "";
    flex: none;
    width: 7px;
    height: 7px;
    margin: 0 2px;
    background: #fff;
}

.search {
    display: flex;
    align-items: center;
    background: #354152;
}

.search input {
    flex: 1;
    min-width: 0;
    padding-left: 2px;
    font-style: italic;
}

.search input::placeholder {
    color: #9aa6b4;
}

.p-text .panel-body {
    padding-left: 6px;
}

.p-text .icons {
    margin: 0 2px 0 6px;
}

.p-dims .panel-body {
    padding-left: 4px;
}

.p-dims .big {
    margin-right: 3px;
}

.p-dims .side {
    margin: 0 5px 0 3px;
}

.p-dims .grow {
    margin-right: 1px;
}

.p-dims .small {
    margin-right: 2px;
}

.p-center .panel-body {
    justify-content: center;
    padding-left: 2px;
}

.p-leaders .panel-body {
    padding-left: 2px;
}

.p-leaders .row {
    justify-content: space-around;
    gap: 0;
}

.p-tables .big {
    padding: 2px 4px 0;
}

.p-tables .select {
    margin-right: 8px;
}

.p-tables .col {
    flex: 1;
    min-width: 0;
}

.p-fields .big {
    padding: 2px 4px 0;
}

.p-fields .small {
    padding: 0 3px;
}

.on {
    background: #2f77a3;
    border: 1px solid #4a9aca;
}

.p-fields .on {
    padding: 0 2px;
}

.p-scale .panel-body {
    padding-left: 6px;
}

.p-scale .col {
    margin-left: 7px;
}

/* drawing tabs */

.doc-tabs {
    flex: none;
    height: 16px;
    display: flex;
    align-items: center;
    padding-left: 7px;
    background: #303743;
}

.burger {
    width: 12px;
    color: #dfe5ec;
}

.doc-tab {
    height: 14px;
    display: flex;
    align-items: center;
    gap: 4px;
    margin-left: 10px;
    padding: 0 6px;
    background: #3f4c63;
    transform: skewX(-20deg);
    font-weight: 600;
}

.doc-tab span,
.doc-tab svg {
    transform: skewX(20deg);
}

.doc-tab svg {
    width: 6px;
    height: 6px;
    color: #8794a5;
}

.doc-tabs .add {
    margin: 0 5px;
}

.slash {
    color: #67707d;
}

/* menu bar */

.menubar {
    flex: none;
    height: 12px;
    display: flex;
    padding: 0 2px;
    background: #45546b;
    border-bottom: 2px solid #2f3a48;
}

.menubar > a,
.menu-item > a {
    display: block;
    padding: 1px 3px 1px 2px;
}

.menu-item {
    position: relative;
    z-index: 2;
}

.menu-item .open {
    background: #272d36;
}

.dropdown {
    position: absolute;
    top: 10px;
    left: 0;
    width: 86px;
    height: 107px;
    display: flex;
    flex-direction: column;
    padding: 0 0 2px;
    background: #455367;
}

.dropdown a {
    flex: 1;
    min-height: 0;
    display: flex;
    align-items: center;
    padding-left: 3px;
}

.dropdown .hover {
    margin: 0 6px 0 1px;
    padding-left: 2px;
    background: #1c88e0;
    box-shadow: inset 0 0 0 1px #4ea8ee;
    color: #fff;
}

.dropdown hr {
    margin: 2px;
    border: none;
    border-top: 1px solid #354253;
}

.cursor {
    position: absolute;
    left: 19px;
    top: 6px;
    width: 7px;
    height: 9px;
}

/* drawing area */

.canvas {
    flex: 1;
    min-height: 0;
    position: relative;
    background: #212830;
}

.drawing {
    width: 100%;
    height: 100%;
}

.dim {
    font: 11px "Roboto", sans-serif;
    fill: #b9cc2c;
    text-anchor: middle;
}

.mark {
    font: 17px "Liberation Sans", sans-serif;
    fill: #eef0f2;
    stroke: #eef0f2;
    stroke-width: .3;
    text-anchor: middle;
}

.level {
    font: 700 10px "Liberation Mono", monospace;
    fill: #c4141f;
    text-anchor: middle;
}

.compass {
    font: 600 9px "Open Sans", sans-serif;
    fill: #868d96;
    text-anchor: middle;
}

.cube-top {
    font: 600 5px "Open Sans", sans-serif;
    fill: #555a60;
    text-anchor: middle;
}

.axis {
    font: 11px "Liberation Sans", sans-serif;
    fill: #b9bec5;
    text-anchor: middle;
}

.view-label {
    position: absolute;
    top: 4px;
    left: 3px;
}

.view-btns {
    position: absolute;
    top: 5px;
    right: 4px;
    display: flex;
    gap: 4px;
    color: #fff;
}

.view-btns svg {
    width: 7px;
    height: 7px;
}

/* layout tabs */

.layouts {
    flex: none;
    height: 12px;
    display: flex;
    align-items: center;
    gap: 7px;
    padding-left: 5px;
    background: #323a47;
}

.layouts .active {
    height: 10px;
    padding: 1px 9px;
    background: #4a5d85;
    transform: skewX(-20deg);
    font-weight: 700;
}

.layouts .active span {
    display: block;
    transform: skewX(20deg);
}

.layouts .add svg {
    width: 8px;
    height: 8px;
}

.new-layout {
    display: flex;
    align-items: center;
    gap: 2px;
}

/* command line */

.command {
    flex: none;
    height: 37px;
    display: flex;
    position: relative;
    background: #2a2b2f;
    font: 7px/9px "Liberation Mono", monospace;
    color: #b3b7bc;
}

.grip {
    width: 11px;
    align-items: flex-start;
    padding-top: 2px;
    background: #3a424e;
    color: #596270;
}

.grip svg {
    width: 5px;
    height: 5px;
}

.cmd-main {
    flex: 1;
    min-width: 0;
}

.history {
    height: 25px;
    padding: 1px 0 0 1px;
    border-bottom: 1px solid #4a4b4f;
}

.prompt {
    display: flex;
    align-items: center;
    height: 12px;
    padding-left: 1px;
}

.beam {
    width: 1px;
    height: 9px;
    margin-left: 5px;
    background: #a9adb2;
}

.prompt input {
    flex: 1;
}

.scroll {
    width: 5px;
    height: 24px;
    background: #3f4247;
}

.stamp {
    position: absolute;
    right: 15px;
    top: 11px;
    width: 16px;
    height: 28px;
    z-index: 1;
}

/* status bar */

.status {
    flex: none;
    height: 14px;
    display: flex;
    align-items: center;
    padding: 0 3px 0 6px;
    background: #2d3542;
}

.coords {
    width: 132px;
    font: 700 5px/8px "Liberation Mono", monospace;
}

.toggles {
    width: 189px;
    display: flex;
    justify-content: space-between;
}

.toggles button {
    width: 12px;
    height: 12px;
}

.status-right {
    display: flex;
    align-items: center;
    gap: 3px;
    margin-left: auto;
}

.status-right .unit {
    gap: 2px;
    margin-right: 1px;
    font: 5px/8px "Liberation Mono", monospace;
    color: #a3abb6;
}

.unit .caret {
    border-width: 3px;
    border-bottom: 0;
}

.more {
    color: #6cb8ef;
}
```
